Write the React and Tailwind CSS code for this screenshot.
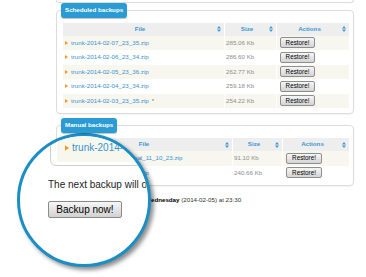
import React from "react";

const SortIcon = () => (
  <svg width="4" height="6" viewBox="0 0 4 6" className="shrink-0">
    <path d="M0 2.6 L2 0 L4 2.6Z M0 3.4 L2 6 L4 3.4Z" fill="#3d9bd6" />
  </svg>
);

const Bullet = ({ w = 3, h = 4 }) => (
  <svg width={w} height={h} viewBox="0 0 3 4" className="shrink-0">
    <path d="M0 0 L3 2 L0 4Z" fill="#f39a1e" />
  </svg>
);

const RestoreBtn = ({ w }) => (
  <button
    className={`${w} h-[11px] rounded-[2px] border border-[#8e8e8e] bg-gradient-to-b from-[#f6f6f6] to-[#d4d4d4] text-[6.3px] leading-none text-black`}
  >
    Restore!
  </button>
);

const HeadCell = ({ children }) => (
  <div className="flex items-center bg-[#eeeeee] pr-[3px]">
    <span className="flex-1 text-center font-bold text-[#3d97d3]">{children}</span>
    <SortIcon />
  </div>
);

function Legend({ children }) {
  return (
    <div className="relative z-10 ml-[5px] inline-flex h-[15px] items-center self-start rounded-[3px] bg-[#2b9bd3] px-[4px] text-[6.2px] font-bold text-white shadow-[0_1px_1px_rgba(0,0,0,0.25)]">
      {children}
    </div>
  );
}

function Row({ cols, bg, name, star, size, btnW }) {
  return (
    <div className={`grid ${cols} h-[14.5px] gap-x-px`}>
      <div className={`flex items-center pl-[2px] ${bg}`}>
        <Bullet />
        <span className="ml-[3px] whitespace-nowrap text-[#3a92d0]">{name}</span>
        {star && <span className="ml-[3px] text-[#777]">*</span>}
      </div>
      <div className={`flex items-center pl-[1px] text-[#8d8d8d] ${bg}`}>{size}</div>
      <div className={`flex items-center pl-[3px] ${bg}`}>
        <RestoreBtn w={btnW} />
      </div>
    </div>
  );
}

export default function App() {
  const sched = [
    ["trunk-2014-02-07_23_35.zip", "285.06 Kb"],
    ["trunk-2014-02-06_23_34.zip", "286.60 Kb"],
    ["trunk-2014-02-05_23_36.zip", "262.77 Kb"],
    ["trunk-2014-02-04_23_34.zip", "259.18 Kb"],
    ["trunk-2014-02-03_23_35.zip", "254.22 Kb", true],
  ];
  const manual = [
    ["trunk-2014-02-05_manual_11_10_23.zip", "91.10 Kb"],
    ["trunk-2014-01-28_16_42.zip", "240.66 Kb"],
  ];
  return (
    <div
      className="relative h-[277px] w-[366px] overflow-hidden bg-white text-[6.2px] leading-none"
      style={{ fontFamily: '"Liberation Sans", Arial, sans-serif' }}
    >
      <div className="flex w-[354px] flex-col pl-[56px]">
        {/* previous box end */}
        <div className="h-[3px] rounded-b-[4px] border-x border-b border-[#dcdcdc]" />

        <Legend>Scheduled backups</Legend>
        <div className="-mt-[8px] rounded-[4px] border border-[#dcdcdc] pb-[5px] pl-[6px] pr-[4px] pt-[12px] shadow-[0_1px_1px_rgba(0,0,0,0.05)]">
          <div className="grid h-[12.5px] grid-cols-[161px_51px_72px] gap-x-px">
            <HeadCell>File</HeadCell>
            <HeadCell>Size</HeadCell>
            <HeadCell>Actions</HeadCell>
          </div>
          {sched.map((r, i) => (
            <Row
              key={i}
              cols="grid-cols-[161px_51px_72px]"
              bg={i % 2 === 0 ? "bg-[#f7f7ef]" : "bg-white"}
              name={r[0]}
              size={r[1]}
              star={r[2]}
              btnW="w-[35px]"
            />
          ))}
        </div>

        <div className="mt-[4px] flex flex-col">
          <Legend>Manual backups</Legend>
          <div className="-mt-[8px] rounded-[4px] border border-[#dcdcdc] pb-[5px] pl-[6px] pr-[4px] pt-[12px] shadow-[0_1px_1px_rgba(0,0,0,0.05)]">
            <div className="grid h-[13px] grid-cols-[169px_49px_66px] gap-x-px">
              <HeadCell>File</HeadCell>
              <HeadCell>Size</HeadCell>
              <HeadCell>Actions</HeadCell>
            </div>
            {manual.map((r, i) => (
              <Row
                key={i}
                cols="grid-cols-[169px_49px_66px]"
                bg={i % 2 === 0 ? "bg-[#f7f7ef]" : "bg-white"}
                name={r[0]}
                size={r[1]}
                btnW="w-[36px]"
              />
            ))}
          </div>
        </div>

        <p className="ml-[6px] mt-[10px] text-[6.2px] leading-[8px] text-[#333]">
          The next backup will occur on <b className="text-black">Wednesday</b> (2014-02-05) at 23:30
        </p>
        <button className="ml-[6px] mt-[5px] h-[11px] w-[42px] self-start rounded-[2px] border border-[#8e8e8e] bg-gradient-to-b from-[#f6f6f6] to-[#d4d4d4] text-[6.3px] text-black">
          Backup now!
        </button>
      </div>

      {/* magnifier */}
      <div className="absolute left-[17px] top-[133px] h-[134px] w-[134px] overflow-hidden rounded-full border-[3px] border-[#1b8fc5] bg-white shadow-[3px_3px_4px_rgba(0,0,0,0.45)]">
        <div className="absolute left-[28px] top-[-40px] flex w-[220px] flex-col">
          <div className="ml-[2px] flex h-[70px] flex-col justify-end rounded-[6px] border border-[#cfcfcf] pb-[3px] pl-[6px]">
            <div className="flex h-[25px] items-center bg-[#f7f7ee] pb-[4px] pl-[8px]">
              <Bullet w={4} h={6} />
              <span className="ml-[3px] whitespace-nowrap text-[10px] text-[#3a92d0]">trunk-2014-02-05_manual_11_10_23.zip</span>
            </div>
          </div>
          <p className="mt-[13px] whitespace-nowrap text-[10px] leading-[12px] text-[#222]">
            The next backup will occur on Wednesday
          </p>
          <button className="mt-[10px] h-[17px] w-[74px] rounded-[2px] border border-[#8a8a8a] bg-gradient-to-b from-[#f7f7f7] to-[#d2d2d2] text-[10px] leading-none text-black">
            Backup now!
          </button>
        </div>
      </div>
    </div>
  );
}
